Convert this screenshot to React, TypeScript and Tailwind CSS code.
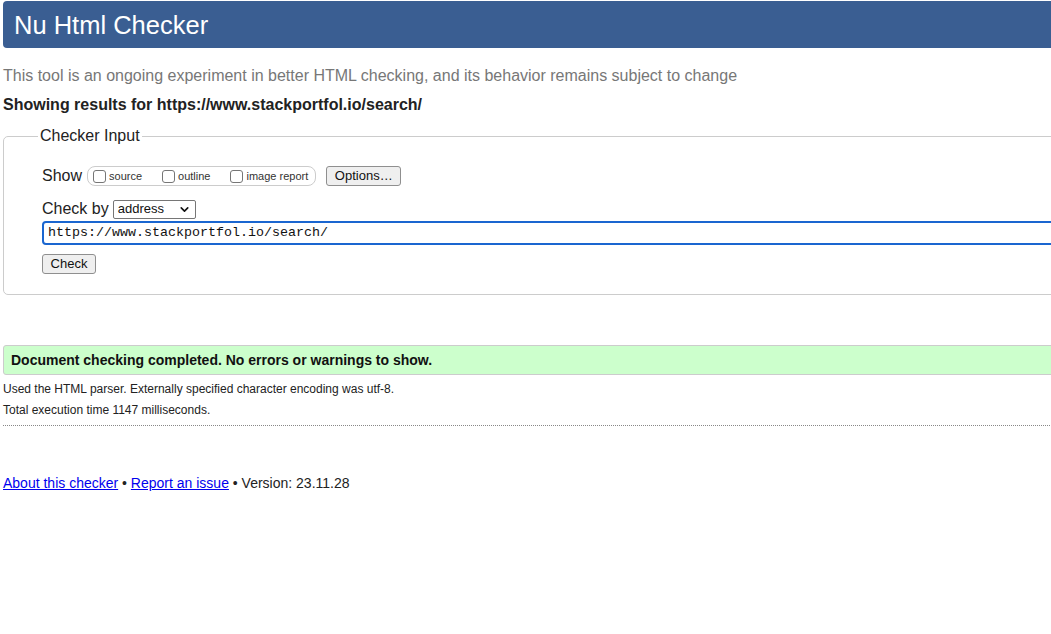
import { ChevronDown } from 'lucide-react';

const Box = ({ label }: { label: string }) => (
  <span className="flex items-center gap-[3px]">
    <span className="h-[13px] w-[13px] rounded-[3px] border border-[#767676] bg-white" />
    <span className="text-[11px] leading-[14px] text-[#333]">{label}</span>
  </span>
);

export default function App() {
  return (
    <div className="h-[634px] w-[1051px] overflow-hidden bg-white font-['Liberation_Sans',Arial,sans-serif] text-[#222]">
      <div className="w-[1120px] pl-[3px]">
        <header className="mt-[1px] flex h-[47px] items-center rounded-[4px] bg-[#3a5e92] px-[11px]">
          <h1 className="text-[25.5px] leading-[30px] font-normal text-white">Nu Html Checker</h1>
        </header>

        <p className="mt-[18px] text-[16px] leading-[20px] text-[#777]">
          This tool is an ongoing experiment in better HTML checking, and its behavior remains subject to change
        </p>
        <p className="mt-[9px] text-[16px] leading-[20px] font-bold text-[#222]">
          Showing results for https://www.stackportfol.io/search/
        </p>

        <fieldset className="mt-[11px] rounded-[5px] border border-[#ccc] pt-[20px] pb-[20px] pl-[38px]">
          <legend className="-ml-[4px] px-[2px] text-[16px] leading-[20px] text-[#222]">Checker Input</legend>

          <div className="flex h-[20px] items-center">
            <span className="text-[16px] leading-[20px]">Show</span>
            <div className="ml-[5px] flex h-[20px] items-center gap-[20px] rounded-[8px] border border-[#ccc] pl-[5px] pr-[7px]">
              <Box label="source" />
              <Box label="outline" />
              <Box label="image report" />
            </div>
            <button className="ml-[10px] flex h-[20px] w-[75px] items-center justify-center rounded-[3px] border border-[#8f8f8f] bg-[#efefef] text-[13px] text-[#111]">
              Options…
            </button>
          </div>

          <div className="mt-[13px] flex h-[20px] items-center">
            <span className="text-[16px] leading-[20px]">Check by</span>
            <div className="ml-[4px] flex h-[19px] w-[83px] items-center justify-between rounded-[2px] border border-[#767676] bg-white pl-[4px] pr-[4px] text-[13px] text-[#111]">
              <span>address</span>
              <ChevronDown size={13} strokeWidth={3} />
            </div>
          </div>

          <div className="mt-[2px] flex h-[24px] items-center rounded-[4px] border-2 border-[#1a66d0] px-[4px] font-['Liberation_Mono',monospace] text-[13.33px] text-[#111]">
            https://www.stackportfol.io/search/
          </div>

          <button className="mt-[9px] flex h-[20px] w-[54px] items-center justify-center rounded-[3px] border border-[#8f8f8f] bg-[#efefef] text-[13px] text-[#111]">
            Check
          </button>
        </fieldset>

        <div className="mt-[50px] flex h-[30px] items-center rounded-[3px] border border-[#ccc] bg-[#ccffcc] px-[7px]">
          <p className="text-[14px] font-bold text-[#111]">Document checking completed. No errors or warnings to show.</p>
        </div>

        <p className="mt-[7px] text-[12px] leading-[14px] text-[#222]">
          Used the HTML parser. Externally specified character encoding was utf-8.
        </p>
        <p className="mt-[7px] text-[12px] leading-[14px] text-[#222]">Total execution time 1147 milliseconds.</p>
        <div className="mt-[8px] border-t border-dotted border-[#888]" />

        <p className="mt-[49px] text-[14px] leading-[17px] text-[#222]">
          <a href="#" className="text-[#0000ee] underline">About this checker</a>
          {' • '}
          <a href="#" className="text-[#0000ee] underline">Report an issue</a>
          {' • Version: 23.11.28'}
        </p>
      </div>
    </div>
  );
}
